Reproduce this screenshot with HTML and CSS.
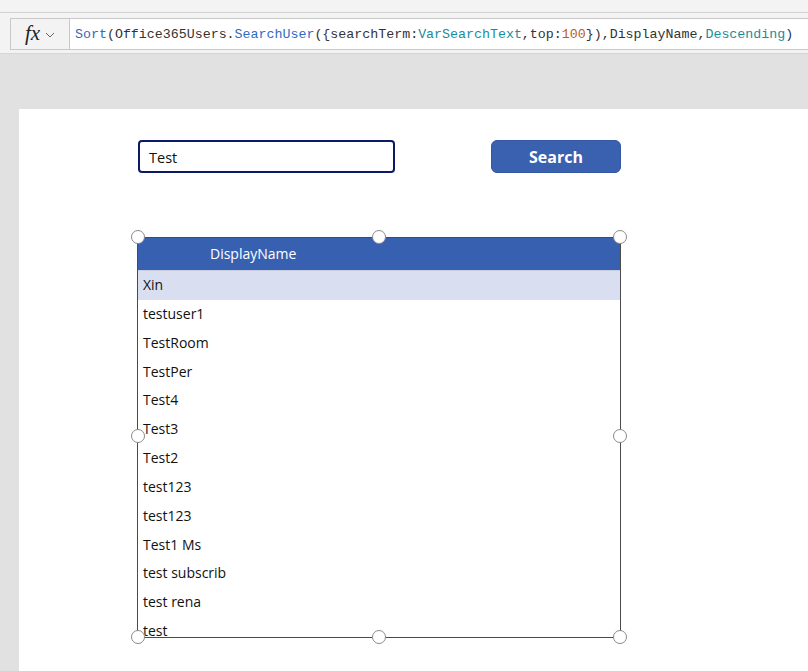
FILE: index.html
```html
<!DOCTYPE html>
<html>
<head>
<meta charset="utf-8">
<link rel="stylesheet" href="styles.css">
</head>
<body>
<div class="topstrip"></div>
<div class="formula-row">
  <div class="fx-box"><span class="fx">fx</span><svg class="chev" width="10" height="6" viewBox="0 0 10 6"><path d="M1 1 L5 5 L9 1" fill="none" stroke="#666" stroke-width="1"/></svg></div>
  <div class="formula"><span class="fn">Sort</span>(Office365Users.<span class="fn">SearchUser</span>({searchTerm:<span class="var">VarSearchText</span>,top:<span class="num">100</span>}),DisplayName,<span class="var">Descending</span><span class="paren">)</span></div>
</div>
<div class="workspace">
  <div class="canvas">
    <div class="controls">
      <div class="textbox">Test</div>
      <div class="button">Search</div>
    </div>
    <div class="gallery-wrap">
      <div class="gallery">
        <div class="gheader">DisplayName</div>
        <div class="row selected">Xin</div>
        <div class="row">testuser1</div>
        <div class="row">TestRoom</div>
        <div class="row">TestPer</div>
        <div class="row">Test4</div>
        <div class="row">Test3</div>
        <div class="row">Test2</div>
        <div class="row">test123</div>
        <div class="row">test123</div>
        <div class="row">Test1 Ms</div>
        <div class="row">test subscrib</div>
        <div class="row">test rena</div>
        <div class="row">test</div>
      </div>
      <span class="handle h-tl"></span>
      <span class="handle h-tc"></span>
      <span class="handle h-tr"></span>
      <span class="handle h-ml"></span>
      <span class="handle h-mr"></span>
      <span class="handle h-bl"></span>
      <span class="handle h-bc"></span>
      <span class="handle h-br"></span>
    </div>
  </div>
</div>
</body>
</html>
```
FILE: styles.css
```css
html, body {
  margin: 0;
  padding: 0;
  height: 100%;
  overflow: hidden;
}
body {
  background: #e1e1e1;
  font-family: "Open Sans", "Noto Sans", sans-serif;
  display: flex;
  flex-direction: column;
}
.topstrip {
  height: 12px;
  background: #f3f3f3;
  border-bottom: 1px solid #d2d2d2;
  flex: none;
}
.formula-row {
  flex: none;
  height: 41px;
  background: #f3f3f3;
  border-bottom: 1px solid #d6d6d6;
  display: flex;
  padding: 5px 0 0 10px;
  box-sizing: border-box;
}
.fx-box {
  width: 59px;
  height: 32px;
  box-sizing: border-box;
  border: 1px solid #c8c8c8;
  border-right: none;
  background: #f3f3f3;
  display: flex;
  align-items: center;
  padding-left: 14px;
  gap: 5px;
}
.fx {
  font-family: "Liberation Serif", "DejaVu Serif", serif;
  font-style: italic;
  font-size: 21px;
  color: #222;
  line-height: 1;
  margin-top: -2px;
}
.chev {
  margin-top: 2px;
}
.formula {
  flex: 1;
  height: 32px;
  box-sizing: border-box;
  border: 1px solid #c8c8c8;
  border-right: none;
  background: #fff;
  font-family: "Liberation Mono", "DejaVu Sans Mono", monospace;
  font-size: 13.3px;
  line-height: 28px;
  padding: 2px 0 0 5px;
  color: #333;
  white-space: nowrap;
  overflow: hidden;
}
.fn { color: #2f6cbf; }
.var { color: #1a8b9c; }
.num { color: #c15b12; }
.paren { color: #1f2f63; }
.workspace {
  flex: 1;
  padding: 55px 0 0 19px;
  display: flex;
}
.canvas {
  flex: 1;
  background: #fff;
  padding: 31px 0 0 118px;
}
.controls {
  display: flex;
  gap: 96px;
  margin-left: 1px;
}
.textbox {
  width: 257px;
  height: 33px;
  box-sizing: border-box;
  border: 2px solid #0a1a66;
  border-radius: 4px;
  font-size: 14.5px;
  color: #111;
  padding-left: 9px;
  line-height: 31px;
}
.button {
  width: 130px;
  height: 33px;
  box-sizing: border-box;
  background: #3a60b0;
  border: 1px solid #3556a0;
  border-radius: 6px;
  color: #fff;
  font-weight: 700;
  font-size: 16px;
  text-align: center;
  line-height: 33px;
}
.gallery-wrap {
  position: relative;
  width: 484px;
  height: 401px;
  margin-top: 64px;
}
.gallery {
  width: 100%;
  height: 100%;
  box-sizing: border-box;
  border: 1px solid #4a4a4a;
  overflow: hidden;
}
.gheader {
  height: 34px;
  margin: -1px -1px 0 -1px;
  background: #3860b1;
  color: #fff;
  font-size: 14px;
  line-height: 33px;
  padding-left: 73px;
  border-bottom: 1px solid #c8cde0;
  box-sizing: border-box;
}
.row {
  height: 28.85px;
  line-height: 28.85px;
  font-size: 14px;
  color: #111;
  padding-left: 5px;
}
.row.selected {
  background: #d9dff0;
}
.handle {
  position: absolute;
  width: 14px;
  height: 14px;
  box-sizing: border-box;
  border: 1px solid #8a8a8a;
  border-radius: 50%;
  background: #fff;
  margin: -7px 0 0 -7px;
}
.h-tl { left: 1px; top: 0; }
.h-tc { left: 242px; top: 0; }
.h-tr { left: 483px; top: 0; }
.h-ml { left: 1px; top: 199px; }
.h-mr { left: 483px; top: 199px; }
.h-bl { left: 1px; top: 400px; }
.h-bc { left: 242px; top: 400px; }
.h-br { left: 483px; top: 400px; }
```
